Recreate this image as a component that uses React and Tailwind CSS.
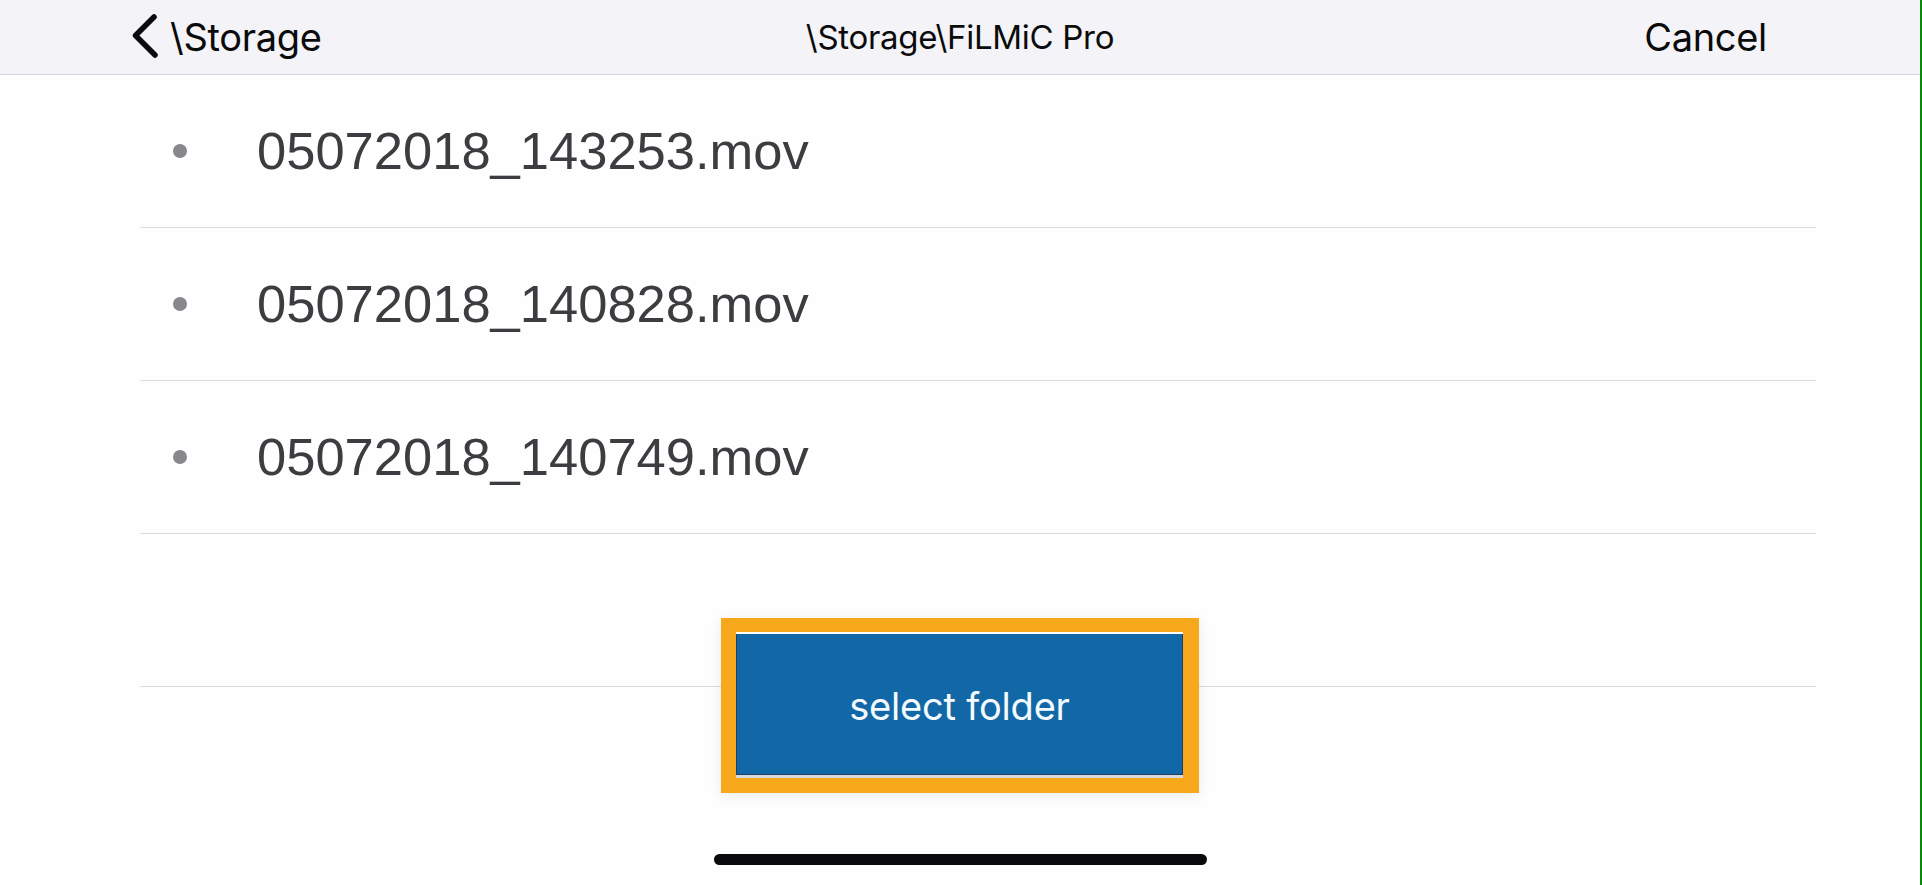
const files = ['05072018_143253.mov', '05072018_140828.mov', '05072018_140749.mov'];

const App = () => {
  return (
    <div className="flex h-[885px] w-full overflow-hidden bg-[#fefefe]">
      <div className="flex min-w-0 flex-1 flex-col">
        {/* nav bar */}
        <div className="grid h-[75px] grid-cols-3 items-center border-b border-[#d3d2d7] bg-[#f4f3f7] font-['Inter',sans-serif] text-[#0b0b0c]">
          <div className="flex items-center pl-[131px]">
            <svg width="30" height="46" viewBox="0 0 30 46" className="mb-[2px]">
              <polyline
                points="23,4 4.5,22.5 24,42"
                fill="none"
                stroke="#0b0b0c"
                strokeWidth="5.5"
                strokeLinecap="round"
                strokeLinejoin="round"
              />
            </svg>
            <span className="ml-[9px] text-[38px] leading-none tracking-[-0.3px]">\Storage</span>
          </div>
          <div className="text-center text-[33px] leading-none tracking-[-0.3px]">\Storage\FiLMiC Pro</div>
          <div className="pr-[153px] text-right text-[38px] leading-none tracking-[-0.3px]">Cancel</div>
        </div>

        {/* file list */}
        <div className="pl-[140px] pr-[104px]">
          {files.map((f) => (
            <div key={f} className="flex h-[153px] items-center border-b border-[#dcdbe0]">
              <span className="ml-[33px] h-[14px] w-[14px] rounded-full bg-[#88878c]" />
              <span className="ml-[70px] font-['Liberation_Sans',Arial,sans-serif] text-[52.5px] leading-none text-[#3d3c41]">
                {f}
              </span>
            </div>
          ))}
          <div className="h-[153px] border-b border-[#dcdbe0]" />
        </div>

        {/* select folder button */}
        <div className="relative z-10 -mt-[69px] flex justify-center">
          <div className="w-[478px] bg-[#f7a81b] pt-[14px] pr-[16px] pb-[15px] pl-[15px] shadow-[0_3px_14px_rgba(0,0,0,0.08)]">
            <div className="border-t-2 border-b-[3px] border-t-white border-b-[#d9d9d9]">
              <div className="flex h-[141px] items-center justify-center border-x border-b border-[#1a3d6c] bg-[#1267a6] pt-[3px] font-['Inter',sans-serif] text-[38px] leading-none tracking-[-0.2px] text-[#f4fbff]">
                select folder
              </div>
            </div>
          </div>
        </div>

        {/* home indicator */}
        <div className="mt-[61px] flex justify-center">
          <div className="h-[11px] w-[493px] rounded-full bg-[#0a090b]" />
        </div>
      </div>
      <div className="w-[2px] bg-[#078a07]" />
    </div>
  );
};

export default App;
